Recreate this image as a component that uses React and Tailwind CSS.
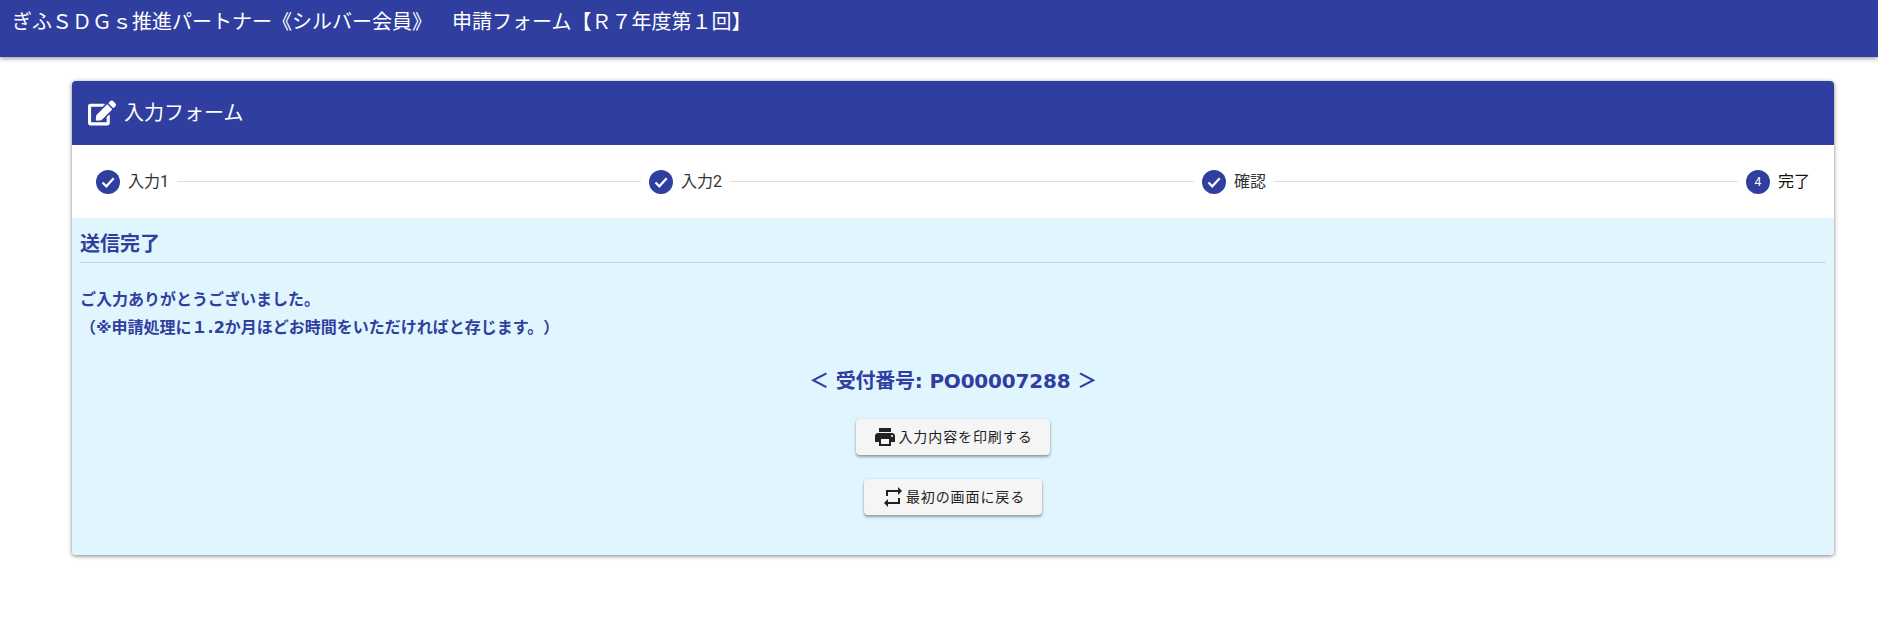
import React from 'react';
import { FaEdit } from 'react-icons/fa';
import { MdPrint, MdRepeat } from 'react-icons/md';

const font = "font-['Roboto','Noto_Sans_CJK_JP',sans-serif]";

const steps = [
  { label: '入力1', done: true },
  { label: '入力2', done: true },
  { label: '確認', done: true },
  { label: '完了', done: false, num: 4 },
];

const Step = ({ step }) => (
  <div className="flex items-center shrink-0">
    <div className="w-6 h-6 rounded-full bg-[#303f9f] text-white flex items-center justify-center text-xs">
      {step.done ? (
        <svg viewBox="0 0 24 24" className="w-6 h-6" fill="none" stroke="currentColor" strokeWidth="2.2">
          <path d="M6.5 12.5l3.8 3.8 7.4-8" />
        </svg>
      ) : (
        step.num
      )}
    </div>
    <span className={`ml-2 text-base ${step.done ? 'text-[#333]' : 'text-[#111]'}`}>{step.label}</span>
  </div>
);

const ActionButton = ({ icon, children }) => (
  <button className="h-9 px-[17px] flex items-center gap-px rounded bg-[#f5f5f5] text-sm tracking-[0.9px] text-[#222] shadow-[0_2px_3px_rgba(0,0,0,0.35),0_0_2px_rgba(0,0,0,0.12)]">
    {icon}
    {children}
  </button>
);

const App = () => {
  return (
    <div className={`min-h-[619px] bg-white [text-spacing-trim:space-all] ${font}`}>
      <header className="h-[57px] bg-[#303f9f] text-white text-xl pl-3 pt-[7px] leading-[30px] shadow-[0_2px_4px_rgba(0,0,0,0.35)]">
        ぎふＳＤＧｓ推進パートナー《シルバー会員》　申請フォーム【Ｒ７年度第１回】
      </header>

      <main className="px-[72px] pt-6 pr-11">
        <div className="rounded overflow-hidden shadow-[0_1px_4px_rgba(0,0,0,0.5)]">
          <div className="h-16 bg-[#303f9f] text-white flex items-center pl-4 text-xl">
            <FaEdit size={28} />
            <span className="ml-2">入力フォーム</span>
          </div>

          <div className="h-[73px] bg-white flex items-center px-6">
            {steps.map((step, i) => (
              <React.Fragment key={step.label}>
                <Step step={step} />
                {i < steps.length - 1 && <div className="flex-1 mx-2 border-t border-[#ddd]" />}
              </React.Fragment>
            ))}
          </div>

          <div className="h-[337px] bg-[#e1f5fe] px-2 pt-2.5 text-[#303f9f] font-bold font-['DejaVu_Sans','Noto_Sans_CJK_JP',sans-serif]">
            <h2 className="text-xl leading-8 pb-0.5 border-b border-[#c5d8e2]">送信完了</h2>
            <p className="mt-[23px] text-base leading-7">ご入力ありがとうございました。</p>
            <p className="text-base leading-7">（※申請処理に１.2か月ほどお時間をいただければと存じます。）</p>

            <div className="mt-[23px] text-center text-xl leading-8 tracking-[-0.2px]">＜ 受付番号: PO00007288 ＞</div>

            <div className={`mt-[22px] flex flex-col items-center gap-6 font-normal ${font}`}>
              <ActionButton icon={<MdPrint size={24} />}>入力内容を印刷する</ActionButton>
              <ActionButton icon={<MdRepeat size={24} />}>最初の画面に戻る</ActionButton>
            </div>
          </div>
        </div>
      </main>
    </div>
  );
};

export default App;
